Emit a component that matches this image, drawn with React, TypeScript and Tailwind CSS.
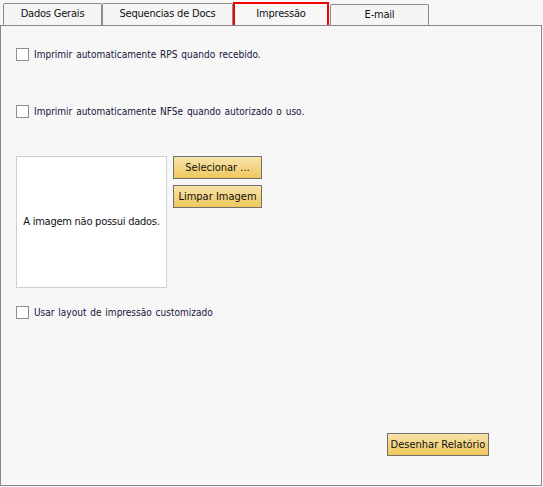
import React from "react";

const font = { fontFamily: "'DejaVu Sans Condensed', 'Liberation Sans', Arial, sans-serif" };

function Check({ label }: { label: string }) {
  return (
    <label className="flex items-center gap-[5px] h-[13px] leading-[13px] text-[10px] text-[#15153a] whitespace-nowrap">
      <span className="w-[13px] h-[13px] border border-[#8e8f8f] bg-white shrink-0" />
      <span className="[word-spacing:1px]">{label}</span>
    </label>
  );
}

function GoldButton({ children, className }: { children: React.ReactNode; className?: string }) {
  return (
    <button
      className={
        "h-[23px] border border-[#707070] bg-gradient-to-b from-[#f7e3a9] to-[#f0c85a] text-[11px] leading-none text-[#111] whitespace-nowrap flex items-center justify-center " +
        (className ?? "")
      }
    >
      {children}
    </button>
  );
}

export default function App() {
  const tabs = [
    { label: "Dados Gerais", w: "w-[99px]" },
    { label: "Sequencias de Docs", w: "w-[131px]" },
  ];
  return (
    <div className="w-[543px] h-[487px] bg-[#f7f7f7] pt-[2px]" style={font}>
      {/* abas */}
      <div className="flex items-end h-[23px] pl-[3px]">
        {tabs.map((t) => (
          <div
            key={t.label}
            className={`${t.w} h-[22px] border border-b-0 border-[#8d8d8d] rounded-t-[2px] bg-[#f5f5f5] flex items-center justify-center text-[11px] tracking-[-0.2px] text-[#111] whitespace-nowrap`}
          >
            {t.label}
          </div>
        ))}
        <div className="w-[96px] h-[23px] border-2 border-b-0 border-[#ee0000] bg-[#f7f7f7] flex items-center justify-center text-[11px] tracking-[-0.2px] text-[#111]">
          Impressão
        </div>
        <div className="w-[99px] h-[21px] ml-[1px] border border-b-0 border-[#8d8d8d] rounded-t-[2px] bg-[#f5f5f5] flex items-center justify-center text-[11px] tracking-[-0.2px] text-[#111]">
          E-mail
        </div>
      </div>

      {/* painel */}
      <div className="w-[542px] h-[461px] border border-[#898989] bg-[#f7f7f7] pl-[15px] pt-[22px] flex flex-col">
        <Check label="Imprimir automaticamente RPS quando recebido." />
        <div className="mt-[44px]">
          <Check label="Imprimir automaticamente NFSe quando autorizado o uso." />
        </div>

        <div className="flex gap-[6px] mt-[38px]">
          <div className="w-[151px] h-[132px] border border-[#cfcfcf] bg-white flex items-center justify-center text-[11px] tracking-[-0.25px] text-[#111] whitespace-nowrap">
            A imagem não possui dados.
          </div>
          <div className="flex flex-col gap-[6px]">
            <GoldButton className="w-[89px]">Selecionar ...</GoldButton>
            <GoldButton className="w-[89px]">Limpar Imagem</GoldButton>
          </div>
        </div>

        <div className="mt-[18px]">
          <Check label="Usar layout de impressão customizado" />
        </div>

        <div className="mt-[114px] pl-[371px]">
          <GoldButton className="w-[102px]">Desenhar Relatório</GoldButton>
        </div>
      </div>
    </div>
  );
}
